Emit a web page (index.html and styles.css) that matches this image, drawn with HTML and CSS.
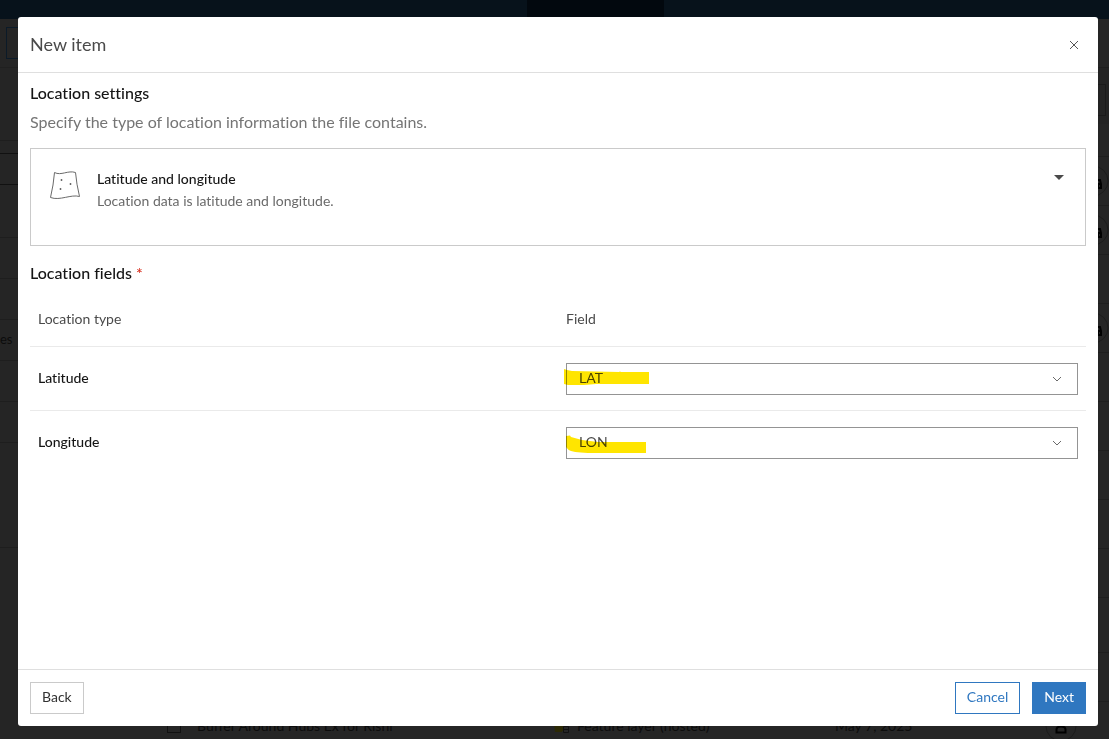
FILE: index.html
```html
<!DOCTYPE html>
<html lang="en">
<head>
<meta charset="utf-8">
<title>New item</title>
<link rel="stylesheet" href="styles.css">
</head>
<body>
<div class="page" aria-hidden="true">
  <div class="navbar"><div class="navbar-tab"></div></div>
  <div class="page-body">
    <div class="sidebar">
      <div class="side-top"><div class="side-button"></div></div>
      <div class="side-row side-gap"></div>
      <div class="side-row side-pad"></div>
      <div class="side-search"></div>
      <div class="side-row side-folder"></div>
      <div class="side-row"></div>
      <div class="side-row"></div>
      <div class="side-row side-label">es</div>
      <div class="side-row"></div>
      <div class="side-row"></div>
      <div class="side-row side-tall"></div>
    </div>
    <div class="list">
      <div class="list-top"></div>
      <div class="list-tools"><div class="list-search"></div></div>
      <div class="list-row list-head"></div>
      <div class="list-row"><svg class="badge" viewBox="0 0 32 32"><circle cx="16" cy="16" r="15"/><path d="M20 15h3l1 4v4h-3v-4h2"/></svg></div>
      <div class="list-row"><svg class="badge" viewBox="0 0 32 32"><circle cx="16" cy="16" r="15"/><path d="M20 15h3l1 4v4h-3v-4h2"/></svg></div>
      <div class="list-row"></div>
      <div class="list-row"><svg class="badge" viewBox="0 0 32 32"><circle cx="16" cy="16" r="15"/><path d="M20 15h3l1 4v4h-3v-4h2"/></svg></div>
      <div class="list-row"></div>
      <div class="list-row"></div>
      <div class="list-row"></div>
      <div class="list-row"></div>
      <div class="list-row"></div>
      <div class="list-row list-large"></div>
      <div class="list-row"></div>
      <div class="list-row list-item">
        <span class="item-check"></span>
        <span class="item-name">Buffer Around Hubs Ex for Rishi</span>
        <svg class="item-icon" viewBox="0 0 18 18"><path fill="#2c2905" d="M1 5l7-4 7 4v9H9v1H2z"/><path fill="#252525" stroke="#111" d="M10.500 9.500h5v6h-5zM10.500 12.500h5"/></svg>
        <span class="item-type">Feature layer (hosted)</span>
        <span class="item-date">May 7, 2025</span>
        <svg class="badge item-badge" viewBox="0 0 32 32"><circle cx="16" cy="16" r="15"/><path d="M11.500 22.500v-3q0-3 4.500-3t4.500 3v3z"/></svg>
      </div>
    </div>
  </div>
</div>

<div class="dialog" role="dialog" aria-modal="true" aria-labelledby="dialog-title">
  <header class="dialog-header">
    <h1 class="dialog-title" id="dialog-title">New item</h1>
    <button class="close" type="button" aria-label="Close"><svg viewBox="0 0 10 10"><path d="M1 1l8 8M9 1L1 9"/></svg></button>
  </header>
  <main class="dialog-body">
    <h2 class="section-title">Location settings</h2>
    <p class="section-note">Specify the type of location information the file contains.</p>
    <button class="picker" type="button" aria-haspopup="listbox">
      <svg class="picker-icon" viewBox="0 0 32 32"><path d="M5.500 2.500C12 6 19 0 26.500 2.500Q27.500 14 30.500 26.500C22 24 11 31 1.500 27.500Q4.500 15 5.500 2.500z"/><path class="picker-dots" d="M12.500 9v2M11.500 10h2M21.500 13v2M20.500 14h2M11.500 18v2M10.500 19h2"/></svg>
      <span class="picker-text">
        <span class="picker-name">Latitude and longitude</span>
        <span class="picker-note">Location data is latitude and longitude.</span>
      </span>
      <svg class="picker-caret" viewBox="0 0 10 5"><path d="M0 0h10L5 5z"/></svg>
    </button>
    <h2 class="section-title fields-title">Location fields <span class="required">*</span></h2>
    <table class="fields">
      <thead>
        <tr><th scope="col">Location type</th><th scope="col">Field</th></tr>
      </thead>
      <tbody>
        <tr>
          <td><label for="lat">Latitude</label></td>
          <td><div class="select-wrap">
            <select class="select" id="lat"><option>LAT</option></select>
            <svg class="chevron" viewBox="0 0 10 6"><path d="M1 1l4 4 4-4"/></svg>
            <svg class="marker" viewBox="0 0 86 32"><path d="M0 6l3 1 5 1 47 1 1-.5 1 .5h28v12H32l-12 1H4l-4-1z"/></svg>
          </div></td>
        </tr>
        <tr>
          <td><label for="lon">Longitude</label></td>
          <td><div class="select-wrap">
            <select class="select" id="lon"><option>LON</option></select>
            <svg class="chevron" viewBox="0 0 10 6"><path d="M1 1l4 4 4-4"/></svg>
            <svg class="marker" viewBox="0 0 86 32"><path d="M2 9l4-.5 1 1.500 11 3 16 2h48v11H32q-18 0-25-2-3-1-5-4z"/></svg>
          </div></td>
        </tr>
      </tbody>
    </table>
  </main>
  <footer class="dialog-footer">
    <button class="button back" type="button">Back</button>
    <button class="button cancel" type="button">Cancel</button>
    <button class="button next" type="button">Next</button>
  </footer>
</div>
</body>
</html>
```
FILE: styles.css
```css
* { box-sizing: border-box; }

body {
  margin: 0;
  height: 100vh;
  overflow: hidden;
  background: #252525;
  color: #151515;
  font-family: Lato, "Liberation Sans", sans-serif;
  font-size: 14px;
  font-variant-ligatures: none;
  line-height: 20px;
}

h1, h2, p { margin: 0; font-weight: 400; }
button, select { font: inherit; font-variant-ligatures: none; cursor: pointer; }
svg { display: block; flex: none; fill: none; }

/* Dimmed page behind the dialog */
.page { display: flex; flex-direction: column; height: 100vh; overflow: hidden; color: #0c0c0c; }
.navbar { flex: none; height: 19px; background: #07121b; }
.navbar-tab { width: 137px; height: 100%; margin-left: 527px; background: #02080e; }
.page-body { display: flex; flex: 1; min-height: 0; }
.sidebar { width: 150px; flex: none; }
.side-top { height: 49px; padding: 8px 6px; border-bottom: 1px solid #202020; }
.side-button { height: 32px; border: 1px solid #0b1a28; }
.side-row { height: 41px; border-bottom: 1px solid #1e1e1e; }
.side-label { font-size: 13px; line-height: 38px; }
.side-gap { height: 73px; }
.side-pad { height: 12px; border: 0; }
.side-search { height: 32px; border: 1px solid #111; border-width: 1px 0; }
.side-folder { height: 53px; }
.side-tall { height: 105px; }
.list { flex: 1; }
.list-top { height: 49px; border-bottom: 1px solid #1e1e1e; }
.list-tools { height: 56px; padding: 16px 3px 8px; background: #232323; }
.list-search { height: 32px; border: 1px solid #1a1a1a; }
.list-row { display: flex; align-items: center; justify-content: flex-end; height: 49px; border-bottom: 1px solid #1e1e1e; }
.list-head { height: 33px; }
.list-large { height: 55px; }
.badge { width: 32px; height: 32px; stroke: #1b1b1b; }
.badge path { stroke: #000; stroke-width: 2; }
.list-item { justify-content: flex-start; height: 48px; padding-left: 17px; }
.item-check { width: 14px; height: 14px; border: 1px solid #111; }
.item-name { flex: none; width: 356px; margin-left: 16px; }
.item-icon { width: 18px; height: 18px; }
.item-type { flex: none; width: 258px; margin-left: 6px; }
.item-date { flex: none; width: 210px; }

/* Dialog */
.dialog {
  position: fixed;
  inset: 17px 11px 13px 18px;
  display: flex;
  flex-direction: column;
  overflow: hidden;
  border-radius: 3px;
  background: #fff;
}
.dialog-header {
  display: flex;
  align-items: center;
  justify-content: space-between;
  flex: none;
  height: 56px;
  padding: 0 12px;
  border-bottom: 1px solid #dfdfdf;
}
.dialog-title { padding-bottom: 2px; color: #4a4a4a; font-size: 18px; line-height: 24px; }
.close { width: 24px; height: 24px; padding: 7px; border: 0; background: none; }
.close svg { width: 10px; height: 10px; stroke: #555; }
.dialog-body { flex: 1; min-height: 0; padding: 10px 12px; overflow: auto; }
.section-title { font-size: 16px; font-weight: 500; }
.section-note { margin-top: 9px; color: #757575; font-size: 16px; }

.picker {
  display: flex;
  align-items: flex-start;
  width: 100%;
  height: 98px;
  margin-top: 16px;
  padding: 19px 21px 19px 18px;
  border: 1px solid #cacaca;
  background: #fff;
  color: #151515;
  text-align: left;
}
.picker-icon { width: 32px; height: 32px; margin-top: 2px; stroke: #6a6a6a; }
.picker-dots { stroke: #6a6a6a; }
.picker-text { display: flex; flex: 1; flex-direction: column; margin-left: 16px; line-height: 22px; }
.picker-name { font-weight: 500; }
.picker-note { color: #6a6a6a; }
.picker-caret { width: 10px; height: 5px; margin-top: 7px; fill: #4a4a4a; }

.fields-title { margin-top: 17px; }
.required { color: #d83020; }
.fields { width: 100%; border-collapse: separate; border-spacing: 0; table-layout: fixed; }
.fields th { padding: 26px 8px 17px; border-bottom: 1px solid #eaeaea; color: #4a4a4a; font-weight: 400; text-align: left; }
.fields td { height: 64px; padding: 16px 8px 15px; border-bottom: 1px solid #eaeaea; }
.fields tr:last-child td { border-bottom-color: transparent; }
.fields label { display: block; padding-bottom: 2px; font-weight: 500; }
.select-wrap { position: relative; }
.select {
  display: block;
  width: 100%;
  height: 32px;
  padding: 0 12px 2px;
  border: 1px solid #949494;
  border-radius: 0;
  appearance: none;
  background: #fff;
  color: #4a4a4a;
}
.chevron { position: absolute; top: 13px; right: 16px; width: 10px; height: 6px; stroke: #6a6a6a; pointer-events: none; }
.marker { position: absolute; top: 0; left: -2px; width: 86px; height: 32px; fill: #ffe500; mix-blend-mode: multiply; pointer-events: none; }

.dialog-footer { display: flex; flex: none; gap: 12px; padding: 12px; border-top: 1px solid #dfdfdf; }
.button { height: 32px; padding: 0 11px 2px; border: 1px solid #cacaca; background: #fff; color: #323232; }
.back { margin-right: auto; }
.cancel { border-color: #2f77c0; color: #2f77c0; }
.next { border-color: #2f77c0; background: #2f77c0; color: #fff; }
```
